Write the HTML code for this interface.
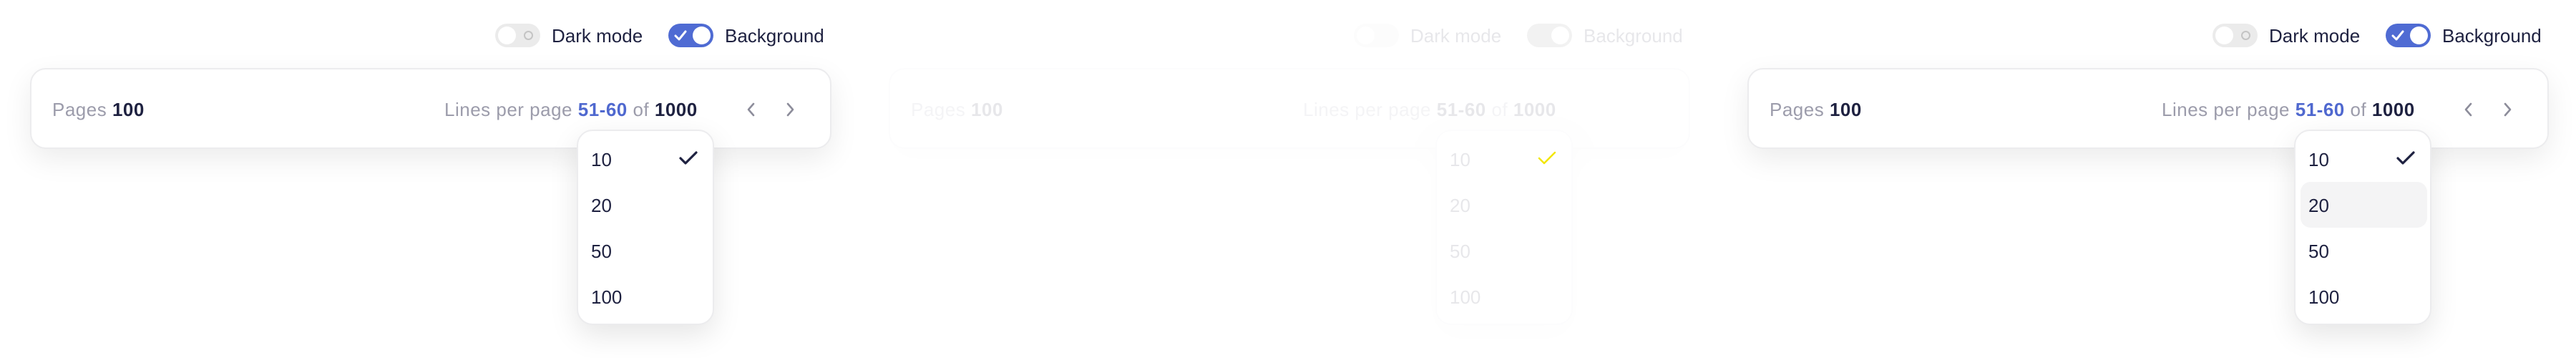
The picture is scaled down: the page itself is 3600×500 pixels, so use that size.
<!DOCTYPE html>
<html><head><meta charset="utf-8"><style>
*{margin:0;padding:0;box-sizing:border-box}
body{width:3600px;height:500px;background:#fff;position:relative;overflow:hidden;font-family:"Liberation Sans",sans-serif;color:#1e2140}
.p{position:absolute;top:0;width:1200px;height:500px}
.tg{position:absolute;top:33px;width:63px;height:33px;border-radius:17px}
.tg .k{position:absolute;top:4px;width:25px;height:25px;border-radius:50%;background:#fff}
.lbl{position:absolute;top:34px;font-size:26px;line-height:32px;color:#1e2140}
.card{position:absolute;left:42px;top:95px;width:1120px;height:113px;border:2px solid #ececee;border-radius:22px;background:#fff;box-shadow:0 14px 40px rgba(0,0,0,.08)}
.t{position:absolute;top:137px;font-size:26px;line-height:32px;color:#9c9cab;white-space:nowrap;letter-spacing:0.5px}
.t b{color:#1e2140}
.t b.bl{color:#4f68cf}
.dd{position:absolute;left:806px;top:181px;width:192px;height:273px;border:2px solid #ececee;border-radius:22px;background:#fff;box-shadow:0 14px 40px rgba(0,0,0,.10)}
.it{position:absolute;left:826px;font-size:26px;line-height:32px;color:#1e2140}
.hv{position:absolute;left:815px;top:254px;width:177px;height:64px;border-radius:14px;background:#f4f4f5}
</style></head><body>

<div class="p" style="left:0">
  <div class="tg" style="left:692px;background:#ebebeb"><div class="k" style="left:4px"></div><div style="position:absolute;left:40px;top:10px;width:13px;height:13px;border-radius:50%;border:2px solid #c4c4c4"></div></div>
  <div class="lbl" style="left:771px">Dark mode</div>
  <div class="tg" style="left:934px;background:#4f6bd3"><svg style="position:absolute;left:8px;top:9px" width="18" height="15" viewBox="0 0 18 15"><path d="M2 8l5 5 9-11" fill="none" stroke="#fff" stroke-width="3" stroke-linecap="round" stroke-linejoin="round"/></svg><div class="k" style="left:34px"></div></div>
  <div class="lbl" style="left:1013px">Background</div>
  <div class="card"></div>
  <div class="t" style="left:73px">Pages <b>100</b></div>
  <div class="t" style="left:621px">Lines per page <b class="bl">51-60</b> of <b>1000</b></div>
  <svg style="position:absolute;left:1040px;top:142px" width="18" height="22" viewBox="0 0 18 22"><path d="M13 3l-7 8 7 8" fill="none" stroke="#8c8c9a" stroke-width="2.6" stroke-linecap="round" stroke-linejoin="round"/></svg>
  <svg style="position:absolute;left:1096px;top:142px" width="18" height="22" viewBox="0 0 18 22"><path d="M5 3l7 8-7 8" fill="none" stroke="#8c8c9a" stroke-width="2.6" stroke-linecap="round" stroke-linejoin="round"/></svg>
  <div class="dd"></div>
  <div class="it" style="top:207px">10</div>
  <svg style="position:absolute;left:948px;top:210px" width="28" height="22" viewBox="0 0 28 22"><path d="M3 11l7 7L25 3" fill="none" stroke="#1e2140" stroke-width="3.2" stroke-linecap="round" stroke-linejoin="round"/></svg>
  <div class="it" style="top:271px">20</div>
  <div class="it" style="top:335px">50</div>
  <div class="it" style="top:399px">100</div>
</div>

<div class="p" style="left:1200px;opacity:.1">
  <div class="tg" style="left:692px;background:#ebebeb"><div class="k" style="left:4px"></div></div>
  <div class="lbl" style="left:771px">Dark mode</div>
  <div class="tg" style="left:934px;background:#888"><div class="k" style="left:34px"></div></div>
  <div class="lbl" style="left:1013px">Background</div>
  <div class="card"></div>
  <div class="t" style="left:73px">Pages <b>100</b></div>
  <div class="t" style="left:621px">Lines per page <b>51-60</b> of <b>1000</b></div>
  <div class="dd"></div>
  <div class="it" style="top:207px">10</div>
  <div class="it" style="top:271px">20</div>
  <div class="it" style="top:335px">50</div>
  <div class="it" style="top:399px">100</div>
</div>
<svg style="position:absolute;left:2148px;top:210px" width="28" height="22" viewBox="0 0 28 22"><path d="M3 11l7 7L25 3" fill="none" stroke="#f2e600" stroke-width="2.4" stroke-linecap="round" stroke-linejoin="round"/></svg>

<div class="p" style="left:2400px">
  <div class="tg" style="left:692px;background:#ebebeb"><div class="k" style="left:4px"></div><div style="position:absolute;left:40px;top:10px;width:13px;height:13px;border-radius:50%;border:2px solid #c4c4c4"></div></div>
  <div class="lbl" style="left:771px">Dark mode</div>
  <div class="tg" style="left:934px;background:#4f6bd3"><svg style="position:absolute;left:8px;top:9px" width="18" height="15" viewBox="0 0 18 15"><path d="M2 8l5 5 9-11" fill="none" stroke="#fff" stroke-width="3" stroke-linecap="round" stroke-linejoin="round"/></svg><div class="k" style="left:34px"></div></div>
  <div class="lbl" style="left:1013px">Background</div>
  <div class="card"></div>
  <div class="t" style="left:73px">Pages <b>100</b></div>
  <div class="t" style="left:621px">Lines per page <b class="bl">51-60</b> of <b>1000</b></div>
  <svg style="position:absolute;left:1040px;top:142px" width="18" height="22" viewBox="0 0 18 22"><path d="M13 3l-7 8 7 8" fill="none" stroke="#8c8c9a" stroke-width="2.6" stroke-linecap="round" stroke-linejoin="round"/></svg>
  <svg style="position:absolute;left:1096px;top:142px" width="18" height="22" viewBox="0 0 18 22"><path d="M5 3l7 8-7 8" fill="none" stroke="#8c8c9a" stroke-width="2.6" stroke-linecap="round" stroke-linejoin="round"/></svg>
  <div class="dd"></div>
  <div class="hv"></div>
  <div class="it" style="top:207px">10</div>
  <svg style="position:absolute;left:948px;top:210px" width="28" height="22" viewBox="0 0 28 22"><path d="M3 11l7 7L25 3" fill="none" stroke="#1e2140" stroke-width="3.2" stroke-linecap="round" stroke-linejoin="round"/></svg>
  <div class="it" style="top:271px">20</div>
  <div class="it" style="top:335px">50</div>
  <div class="it" style="top:399px">100</div>
</div>
</body></html>
